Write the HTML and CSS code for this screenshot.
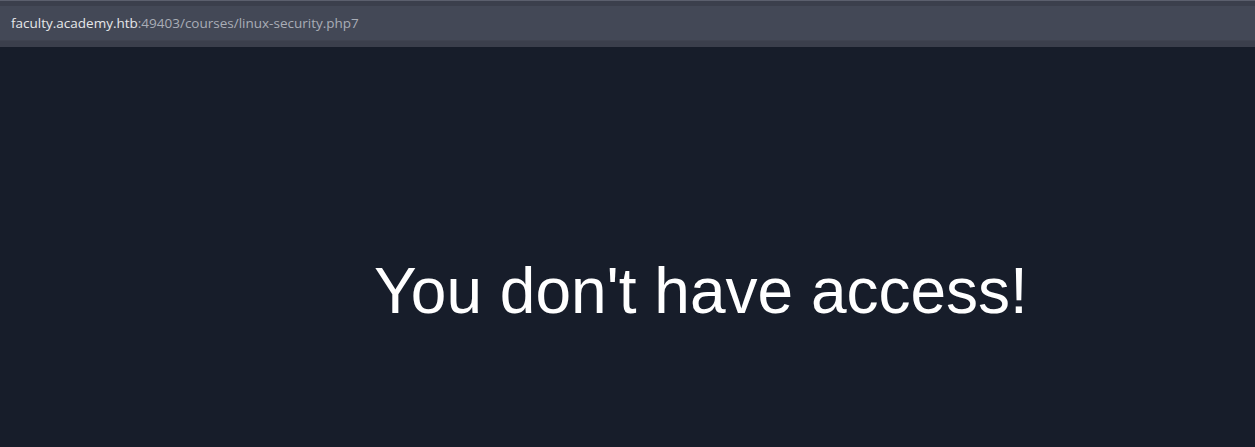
FILE: index.html
```html
<!DOCTYPE html>
<html>
<head>
<meta charset="utf-8">
<link rel="stylesheet" href="styles.css">
</head>
<body>
<header class="urlbar">
  <div class="urlbar-inner">
    <span class="host">faculty.academy.htb</span><span class="path">:49403/courses/linux-security.php7</span>
  </div>
</header>
<main class="content">
  <h1 class="message">You don't have access!</h1>
</main>
</body>
</html>
```
FILE: styles.css
```css
html, body {
  margin: 0;
  padding: 0;
  background: #171d2a;
  height: 100%;
}
body {
  overflow: hidden;
}
.urlbar {
  height: 47px;
  box-sizing: border-box;
  background: #3b3f4c;
  border-top: 1px solid #5b5f6d;
  padding-top: 5px;
}
.urlbar-inner {
  height: 34px;
  background: #434856;
  display: flex;
  align-items: center;
  padding-left: 11px;
  font-family: "Open Sans", "DejaVu Sans", sans-serif;
  font-size: 13.5px;
  box-shadow: 0 1px 0 #3f4350, 0 3px 0 #3b3f4c;
}
.host {
  color: #e6e7ea;
}
.path {
  color: #a9adb6;
}
.content {
  padding-top: 212px;
  padding-left: 374px;
}
.message {
  margin: 0;
  font-family: "Liberation Sans", Arial, sans-serif;
  font-weight: normal;
  font-size: 64px;
  line-height: 64px;
  color: #ffffff;
}
```
